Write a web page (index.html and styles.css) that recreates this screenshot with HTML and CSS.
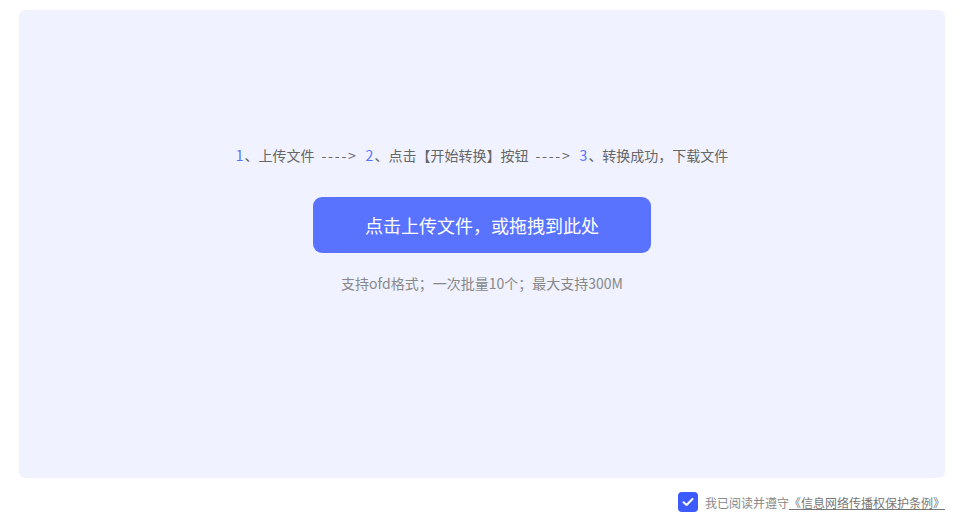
FILE: index.html
```html
<!DOCTYPE html>
<html lang="zh-CN">
<head>
<meta charset="utf-8">
<title>上传文件</title>
<link rel="stylesheet" href="styles.css">
</head>
<body>
<div class="page">
  <div class="panel">
    <div class="steps">
      <span class="num">1</span><span>、上传文件</span>
      <span class="arrow">----&gt;</span>
      <span class="num">2</span><span>、点击【开始转换】按钮</span>
      <span class="arrow">----&gt;</span>
      <span class="num">3</span><span>、转换成功，下载文件</span>
    </div>
    <button class="upload-btn">点击上传文件，或拖拽到此处</button>
    <div class="hint">支持ofd格式；一次批量10个；最大支持300M</div>
  </div>
  <div class="footer">
    <span class="checkbox">
      <svg width="12" height="10" viewBox="0 0 12 10"><path d="M1.5 5.2 L4.6 8 L10.5 2" fill="none" stroke="#fff" stroke-width="2" stroke-linecap="round" stroke-linejoin="round"/></svg>
    </span>
    <span class="agree">我已阅读并遵守<a class="link">《信息网络传播权保护条例》</a></span>
  </div>
</div>
</body>
</html>
```
FILE: styles.css
```css
html, body {
  margin: 0;
  padding: 0;
  background: #ffffff;
  font-family: "Noto Sans CJK SC", "Noto Sans", sans-serif;
}
.page {
  padding: 10px 21px 0 19px;
}
.panel {
  height: 468px;
  box-sizing: border-box;
  background: #f0f2ff;
  border-radius: 6px;
  display: flex;
  flex-direction: column;
  align-items: center;
  padding-top: 135px;
}
.steps {
  font-size: 14px;
  line-height: 20px;
  color: #666666;
  display: flex;
  align-items: center;
}
.steps .num {
  color: #5a73ff;
  margin-right: 1px;
}
.steps .arrow {
  margin: 0 8px 0 7px;
  letter-spacing: 1.8px;
  color: #666666;
}
.upload-btn {
  margin-top: 32px;
  width: 338px;
  height: 56px;
  border: none;
  border-radius: 9px;
  background: #5a73ff;
  color: #ffffff;
  font-family: inherit;
  font-size: 18px;
  cursor: pointer;
}
.hint {
  margin-top: 20px;
  font-size: 14px;
  line-height: 20px;
  color: #888888;
}
.footer {
  display: flex;
  justify-content: flex-end;
  align-items: center;
  margin-top: 14px;
}
.checkbox {
  width: 20px;
  height: 20px;
  border-radius: 4px;
  background: #3d5afe;
  display: flex;
  align-items: center;
  justify-content: center;
  margin-right: 7px;
}
.agree {
  font-size: 12px;
  color: #888888;
}
.link {
  color: #777777;
  text-decoration: underline;
}
```
